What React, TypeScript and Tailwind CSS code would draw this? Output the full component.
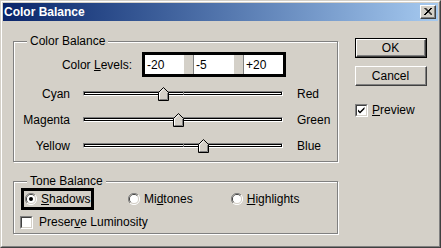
import type { ReactNode } from 'react';

const FONT = { fontFamily: '"Liberation Sans", Arial, sans-serif' };

function GroupBox({ title, className, children }: { title: string; className: string; children: ReactNode }) {
  return (
    <div className={`relative border border-[#808080] shadow-[inset_1px_1px_0_#fff,1px_1px_0_#fff] ${className}`}>
      <span className="absolute -top-[8px] left-[13px] bg-[#d4d0c8] px-[3px] leading-[14px]">{title}</span>
      {children}
    </div>
  );
}

function Thumb() {
  return (
    <svg width="11" height="14" viewBox="0 0 11 14">
      <path d="M0.5 13.5 V5.5 L5.5 0.5 L10.5 5.5 V13.5 Z" fill="#d4d0c8" stroke="#000" />
      <path d="M1.5 12.5 V5.9 L5.5 1.9" fill="none" stroke="#fff" />
      <path d="M9.5 6 V12.5 H1.5" fill="none" stroke="#808080" />
    </svg>
  );
}

function SliderRow({ left, right, value }: { left: string; right: string; value: number }) {
  // value in -100..100, track is 200px wide
  return (
    <div className="flex h-[26px] items-center">
      <span className="w-[56px] text-right">{left}</span>
      <div className="relative ml-[13px] h-[26px] w-[200px]">
        <div className="absolute left-0 right-0 top-[10px] h-[5px] border-t border-l border-[#808080] border-b-white border-r-white border-b border-r">
          <div className="h-[3px] border border-black bg-white" />
        </div>
        <div className="absolute left-[100px] top-[11px] h-[3px] w-[1px] bg-[#808080]" />
        <div className="absolute top-[6px]" style={{ left: 100 + value - 5 }}>
          <Thumb />
        </div>
      </div>
      <span className="ml-[14px]">{right}</span>
    </div>
  );
}

function Radio({ checked }: { checked?: boolean }) {
  return (
    <svg width="12" height="12" viewBox="0 0 12 12">
      <path d="M10 2 A5.5 5.5 0 0 0 2 10" fill="none" stroke="#808080" />
      <path d="M9.2 2.8 A4.5 4.5 0 0 0 2.8 9.2" fill="none" stroke="#404040" />
      <path d="M2 10 A5.5 5.5 0 0 0 10 2" fill="none" stroke="#fff" />
      <circle cx="6" cy="6" r="4" fill="#fff" />
      {checked && <circle cx="6" cy="6" r="2" fill="#000" />}
    </svg>
  );
}

function CheckBox({ checked }: { checked?: boolean }) {
  return (
    <div className="h-[13px] w-[13px] border-t border-l border-[#808080] border-b border-r border-b-white border-r-white">
      <div className="h-[11px] w-[11px] border-t border-l border-[#404040] border-b border-r border-b-[#d4d0c8] border-r-[#d4d0c8] bg-white">
        {checked && (
          <svg width="9" height="9" viewBox="0 0 9 9">
            <path d="M1 3.5 L3 5.5 L7.5 1 V3 L3 7.5 L1 5.5 Z" fill="#000" />
          </svg>
        )}
      </div>
    </div>
  );
}

function Button({ label, isDefault }: { label: string; isDefault?: boolean }) {
  return (
    <div className={`w-[72px] ${isDefault ? 'border border-black' : ''}`}>
      <div className="border-t border-l border-white border-b border-r border-b-[#404040] border-r-[#404040]">
        <div className={`flex items-center justify-center border-b border-r border-[#808080] ${isDefault ? 'h-[16px]' : 'h-[18px]'}`}>
          {label}
        </div>
      </div>
    </div>
  );
}

export default function App() {
  return (
    <div
      className="h-[248px] w-[441px] border-t border-l border-[#d4d0c8] border-b border-r border-b-[#404040] border-r-[#404040] text-[12px] text-black"
      style={FONT}
    >
      <div className="h-full border-t border-l border-white border-b border-r border-b-[#808080] border-r-[#808080] bg-[#d4d0c8] p-[1px]">
        {/* Title bar */}
        <div className="flex h-[18px] items-center justify-between bg-gradient-to-r from-[#0a246a] to-[#a6caf0] pl-[1px] pr-[2px]">
          <span className="text-[12px] font-bold text-white">Color Balance</span>
          <div className="h-[14px] w-[16px] border-t border-l border-white border-b border-r border-b-[#404040] border-r-[#404040] bg-[#d4d0c8]">
            <div className="flex h-full items-center justify-center border-b border-r border-[#808080]">
              <svg width="8" height="7" viewBox="0 0 8 7">
                <path d="M0.5 0 L7.5 7 M1.5 0 L8.5 7 M7 0 L0 7 M8 0 L1 7" stroke="#000" strokeWidth="1" />
              </svg>
            </div>
          </div>
        </div>

        <div className="flex pl-[10px] pt-[20px]">
          {/* Left column */}
          <div className="flex w-[325px] flex-col">
            <GroupBox title="Color Balance" className="h-[121px] pt-[10px]">
              <div className="flex h-[25px] items-center">
                <span className="w-[118px] text-right">
                  Color <u>L</u>evels:
                </span>
                <div className="ml-[10px] flex h-[25px] w-[144px] border-[3px] border-black bg-[#d4d0c8]">
                  <div className="flex w-[39px] items-center bg-white pl-[2px]">-20</div>
                  <div className="w-[10px] border-r border-[#808080]" />
                  <div className="flex w-[40px] items-center bg-white pl-[2px]">-5</div>
                  <div className="w-[10px] border-r border-[#808080]" />
                  <div className="flex w-[39px] items-center bg-white pl-[2px]">+20</div>
                </div>
              </div>
              <div className="mt-[4px] flex flex-col">
                <SliderRow left="Cyan" right="Red" value={-20} />
                <SliderRow left="Magenta" right="Green" value={-5} />
                <SliderRow left="Yellow" right="Blue" value={20} />
              </div>
            </GroupBox>

            <GroupBox title="Tone Balance" className="mt-[19px] h-[53px] pt-[6px]">
              <div className="flex h-[22px] items-center">
                <div className="ml-[7px] flex h-[22px] w-[73px] items-center gap-[4px] border-[3px] border-black pl-[1px]">
                  <Radio checked />
                  <span>
                    <u>S</u>hadows
                  </span>
                </div>
                <div className="ml-[34px] flex items-center gap-[4px]">
                  <Radio />
                  <span>
                    Mi<u>d</u>tones
                  </span>
                </div>
                <div className="ml-[38px] flex items-center gap-[4px]">
                  <Radio />
                  <span>
                    <u>H</u>ighlights
                  </span>
                </div>
              </div>
              <div className="ml-[6px] mt-[3px] flex items-center gap-[6px]">
                <CheckBox />
                <span>
                  Preser<u>v</u>e Luminosity
                </span>
              </div>
            </GroupBox>
          </div>

          {/* Right column */}
          <div className="ml-[17px] flex flex-col">
            <div className="-mt-[3px]">
              <Button label="OK" isDefault />
            </div>
            <div className="mt-[8px]">
              <Button label="Cancel" />
            </div>
            <div className="mt-[15px] flex items-center gap-[4px]">
              <CheckBox checked />
              <span>
                <u>P</u>review
              </span>
            </div>
          </div>
        </div>
      </div>
    </div>
  );
}
